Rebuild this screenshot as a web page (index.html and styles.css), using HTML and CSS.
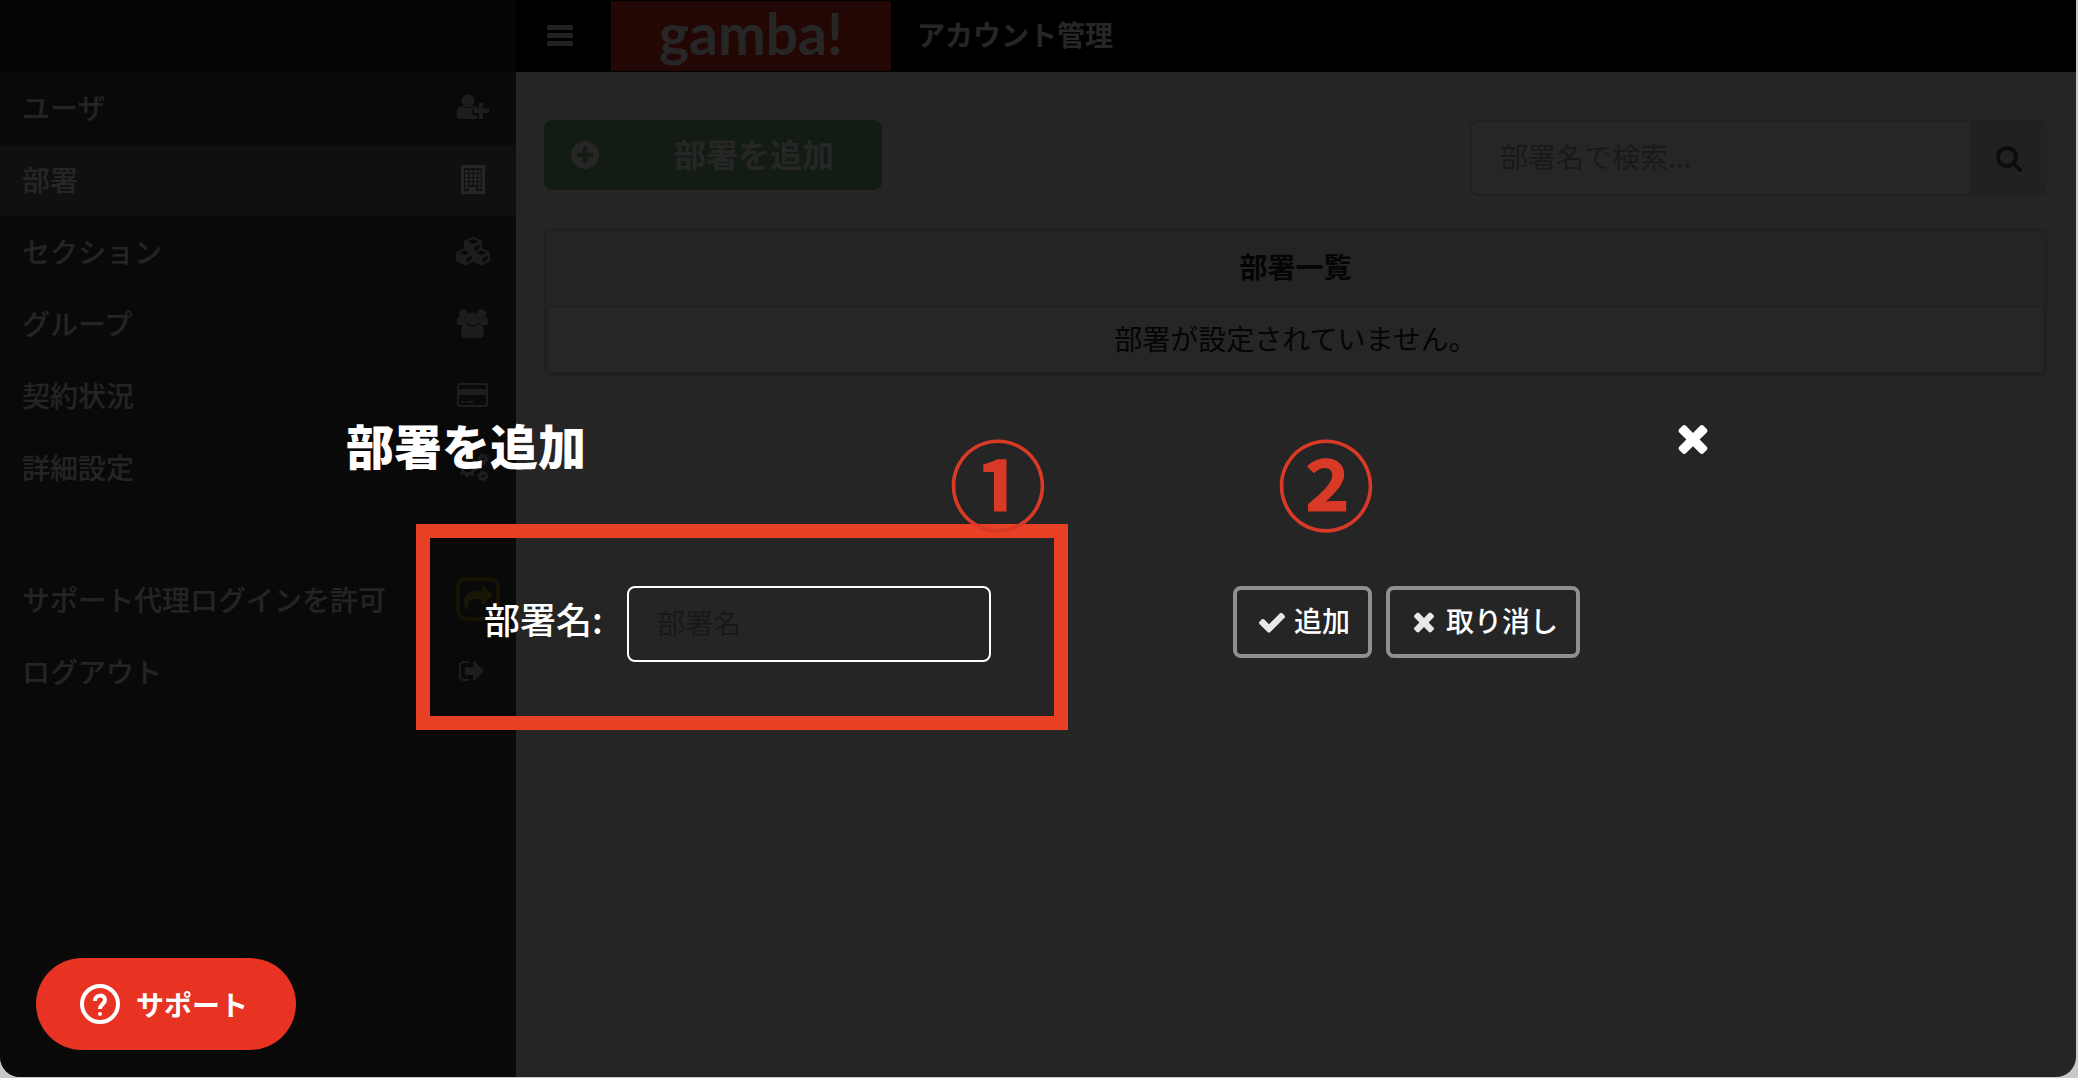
FILE: index.html
```html
<!DOCTYPE html>
<html lang="ja">
<head>
    <meta charset="UTF-8">
    <meta name="viewport" content="width=device-width, initial-scale=1.0">
    <title>gamba! アカウント管理</title>
    <link rel="stylesheet" href="styles.css">
</head>
<body>
    <div class="window">
        <aside class="sidebar">
            <div class="sidebar-top"></div>
            <nav>
                <a class="menu-item" href="#">ユーザ
                    <svg class="menu-icon" viewBox="0 0 34 34"><circle cx="12" cy="11" r="6.5"/><path d="M6 16c3 3 9 3 12 0 2 0 3 1 3.500 2.500H16.500V25H21v4H4.500C2 29 0.500 27.500 0.500 25c0-5 1.500-9 5.500-9z"/><path d="M23 13h4v5.500h6V23h-6v6h-4v-6h-5v-4.500h5z"/></svg>
                </a>
                <a class="menu-item active" href="#">部署
                    <svg class="menu-icon" viewBox="0 0 34 34"><path fill-rule="evenodd" d="M5 3h24v29H5zM8 6v23h5v-4h7v4h6V6z"/><path d="M9 8h3v3H9zm4.500 0h3v3h-3zm4.500 0h3v3h-3zm4 0h3v3h-3zM9 12h3v3H9zm4.500 0h3v3h-3zm4.500 0h3v3h-3zm4 0h3v3h-3zM9 16h3v3H9zm4.500 0h3v3h-3zm4.500 0h3v3h-3zm4 0h3v3h-3zM9 20h3v3H9zm4.500 0h3v3h-3zm4.500 0h3v3h-3zm4 0h3v3h-3zM9 24h3v3H9zm13 0h3v3h-3z"/></svg>
                </a>
                <a class="menu-item" href="#">セクション
                    <svg class="menu-icon" viewBox="0 0 34 34">
                        <defs><path id="cube" fill-rule="evenodd" d="M9 0L18 4v9l-9 4.500L0 13V4zM3.500 4.500l5.500 2.500L14.500 4.500 9 2zM10.500 10v4.500l5-2.500V7.500z"/></defs>
                        <use href="#cube" x="8" y="3"/><use href="#cube" x="0" y="14"/><use href="#cube" x="16" y="14"/>
                    </svg>
                </a>
                <a class="menu-item" href="#">グループ
                    <svg class="menu-icon" viewBox="0 0 34 34"><circle cx="7.500" cy="8" r="4.500"/><circle cx="25.500" cy="8" r="4.500"/><circle cx="16.500" cy="13" r="6.500"/><path d="M3 11c2 2 5 2.500 7 1-.5 3 0 5 1.500 7H4c-2 0-3-1-3-3 0-2 .5-5 2-5zm27 0c-2 2-5 2.500-7 1 .5 3 0 5-1.500 7H29c2 0 3-1 3-3 0-2-.5-5-2-5zM10 18c4 3.500 9 3.500 13 0 4 0 5 5 5 9 0 3-1.500 5-4 5H9.500c-3 0-4.500-2-4.500-5 0-4 1-9 5-9z"/></svg>
                </a>
                <a class="menu-item" href="#">契約状況
                    <svg class="menu-icon" viewBox="0 0 34 34"><path fill-rule="evenodd" d="M4 5h25c2 0 3 1 3 3v18c0 2-1 3-3 3H4c-2 0-3-1-3-3V8c0-2 1-3 3-3zm0 2c-.7 0-1 .3-1 1v3h27V8c0-.7-.3-1-1-1zM3 17v9c0 .7.3 1 1 1h25c.7 0 1-.3 1-1v-9zM5 23h4v2H5zm6 0h6v2h-6z"/></svg>
                </a>
                <a class="menu-item" href="#">詳細設定
                    <svg class="menu-icon gears" viewBox="0 0 34 34"><circle cx="12" cy="18" r="6"/><circle class="teeth" cx="12" cy="18" r="8"/><circle cx="27" cy="9" r="3"/><circle class="teeth small" cx="27" cy="9" r="4"/><circle cx="27" cy="26" r="3"/><circle class="teeth small" cx="27" cy="26" r="4"/></svg>
                </a>
            </nav>
            <nav class="menu-bottom">
                <a class="menu-item" href="#">サポート代理ログインを許可
                    <span class="proxy-icon"><svg viewBox="0 0 1792 1792"><path d="M1792 640q0 26-19 45l-512 512q-19 19-45 19t-45-19-19-45v-256h-224q-98 0-175.500 6t-154 21.500-133 42.500-105.500 69.500-80 101-48.500 138.500-17.500 181q0 55 5 123 0 6 2.500 23.500t2.500 26.500q0 15-8.500 25t-23.500 10q-16 0-28-17-7-9-13-22t-13.500-30-10.500-24q-127-285-127-451 0-199 53-333 162-403 875-403h224v-256q0-26 19-45t45-19 45 19l512 512q19 19 19 45z"/></svg></span>
                </a>
                <a class="menu-item" href="#">ログアウト
                    <svg class="menu-icon logout-icon" viewBox="0 0 1792 1792"><path d="M704 1440q0 4 1 20t.5 26.500-3 23.500-10 19.500-20.500 6.500h-320q-119 0-203.500-84.500t-84.500-203.500v-704q0-119 84.500-203.500t203.500-84.500h320q13 0 22.500 9.500t9.500 22.500q0 4 1 20t.5 26.500-3 23.500-10 19.500-20.500 6.500h-320q-66 0-113 47t-47 113v704q0 66 47 113t113 47h312l11.500 1 11.500 3 8 5.500 7 9 2 13.500zm928-544q0 26-19 45l-544 544q-19 19-45 19t-45-19-19-45v-288h-448q-26 0-45-19t-19-45v-384q0-26 19-45t45-19h448v-288q0-26 19-45t45-19 45 19l544 544q19 19 19 45z"/></svg>
                </a>
            </nav>
        </aside>

        <div class="main">
            <header class="header">
                <button class="menu-toggle" type="button" aria-label="メニュー">
                    <svg viewBox="0 0 26 22"><rect width="26" height="5" rx="1"/><rect y="8" width="26" height="5" rx="1"/><rect y="16" width="26" height="5" rx="1"/></svg>
                </button>
                <a class="logo" href="#">gamba!</a>
                <span class="header-title">アカウント管理</span>
            </header>
            <main class="content">
                <div class="toolbar">
                    <button class="add-button" type="button">
                        <svg viewBox="128 128 1536 1536"><path d="M1344 960v-128q0-26-19-45t-45-19h-256v-256q0-26-19-45t-45-19h-128q-26 0-45 19t-19 45v256h-256q-26 0-45 19t-19 45v128q0 26 19 45t45 19h256v256q0 26 19 45t45 19h128q26 0 45-19t19-45v-256h256q26 0 45-19t19-45zm320-64q0 209-103 385.500t-279.500 279.500-385.500 103-385.500-103-279.500-279.500-103-385.500 103-385.500 279.500-279.500 385.500-103 385.500 103 279.500 279.500 103 385.500z"/></svg>
                        <span>部署を追加</span>
                    </button>
                    <form class="search">
                        <input type="text" placeholder="部署名で検索..." aria-label="部署名で検索">
                        <button type="button" aria-label="検索">
                            <svg viewBox="64 128 1664 1664"><path d="M1216 832q0-185-131.500-316.500t-316.500-131.500-316.500 131.500-131.500 316.500 131.500 316.500 316.500 131.500 316.500-131.500 131.500-316.500zm512 832q0 52-38 90t-90 38q-54 0-90-38l-343-342q-179 124-399 124-143 0-273.500-55.500t-225-150-150-225-55.500-273.500 55.500-273.500 150-225 225-150 273.500-55.500 273.500 55.500 225 150 150 225 55.500 273.500q0 220-124 399l343 343q37 37 37 90z"/></svg>
                        </button>
                    </form>
                </div>
                <table class="list">
                    <thead>
                        <tr><th>部署一覧</th></tr>
                    </thead>
                    <tbody>
                        <tr><td>部署が設定されていません。</td></tr>
                    </tbody>
                </table>
            </main>
        </div>

        <div class="overlay">
            <section class="modal" role="dialog" aria-labelledby="modal-title">
                <div class="modal-head">
                    <h1 id="modal-title">部署を追加</h1>
                    <button class="close" type="button" aria-label="閉じる">
                        <svg viewBox="302 238 1188 1316"><use href="#times"/></svg>
                    </button>
                </div>
                <form class="modal-form">
                    <div class="field">
                        <span class="step">①</span>
                        <label for="name">部署名:</label>
                        <input id="name" type="text" placeholder="部署名">
                    </div>
                    <div class="actions">
                        <span class="step">②</span>
                        <button type="button">
                            <svg viewBox="121 242 1550 1280"><path d="M1671 566q0 40-28 68l-724 724-136 136q-28 28-68 28t-68-28l-136-136-362-362q-28-28-28-68t28-68l136-136q28-28 68-28t68 28l294 295 656-657q28-28 68-28t68 28l136 136q28 28 28 68z"/></svg>追加
                        </button>
                        <button class="cancel" type="button">
                            <svg viewBox="302 302 1188 1252"><path id="times" d="M1490 1322q0 40-28 68l-136 136q-28 28-68 28t-68-28l-294-294-294 294q-28 28-68 28t-68-28l-136-136q-28-28-28-68t28-68l294-294-294-294q-28-28-28-68t28-68l136-136q28-28 68-28t68 28l294 294 294-294q28-28 68-28t68 28l136 136q28 28 28 68t-28 68l-294 294 294 294q28 28 28 68z"/></svg>取り消し
                        </button>
                    </div>
                </form>
            </section>
        </div>

        <button class="support" type="button">
            <svg viewBox="0 0 40 40"><circle cx="20" cy="20" r="18"/><path d="M15 17c0-7 10-7 10-1 0 4-5 4-5 9"/><circle class="dot" cx="20" cy="30" r="2"/></svg>
            サポート
        </button>
    </div>
</body>
</html>
```

FILE: styles.css
```css
* {
    box-sizing: border-box;
}
body {
    margin: 0;
    background: #c8c8c8;
    font-family: "Noto Sans CJK JP", sans-serif;
    font-size: 28px;
    line-height: 40px;
}
button, input {
    font: inherit;
    margin: 0;
}
button {
    padding: 0;
    border: none;
    background: none;
    color: inherit;
}
a {
    color: inherit;
    text-decoration: none;
}
svg {
    display: block;
    flex: none;
    fill: currentColor;
}
.window {
    position: relative;
    display: flex;
    min-height: calc(100vh - 1px);
    margin-right: 2px;
    overflow: hidden;
    border-radius: 0 0 20px 20px;
    background: #f7f7f7;
}

/* sidebar */
.sidebar {
    flex: none;
    width: 516px;
    background: #404040;
    color: #eee;
    font-weight: 500;
}
.sidebar-top {
    height: 72px;
    background: #262626;
}
.menu-item {
    display: flex;
    align-items: center;
    justify-content: space-between;
    height: 72px;
    padding: 0 16px 4px 22px;
    border-top: 1px solid #484848;
}
.menu-item.active {
    background: #73676b;
    color: #fff;
}
.menu-icon {
    width: 34px;
    height: 34px;
    margin-right: 10px;
    color: #c4c4c4;
}
.active .menu-icon {
    color: #fff;
}
.gears {
    fill: none;
    stroke: currentColor;
    stroke-width: 3;
}
.teeth {
    stroke-dasharray: 3 3;
}
.teeth.small {
    stroke-dasharray: 2 2;
}
.menu-bottom {
    margin-top: 60px;
}
.proxy-icon {
    padding: 4px;
    border: 4px solid #9c7c18;
    border-radius: 10px;
    color: #b0942c;
}
.proxy-icon svg {
    width: 28px;
    height: 28px;
}
.logout-icon {
    width: 28px;
    height: 28px;
    margin-right: 14px;
}

/* header */
.main {
    flex: 1;
}
.header {
    display: flex;
    align-items: center;
    height: 72px;
    background: #000;
    color: #fff;
    font-weight: bold;
}
.menu-toggle {
    width: 95px;
    padding-left: 31px;
    color: #ddd;
}
.menu-toggle svg {
    width: 26px;
    height: 22px;
}
.logo {
    width: 280px;
    height: 70px;
    background: #e22f1b;
    font-family: Lato, sans-serif;
    font-size: 57px;
    font-weight: bold;
    line-height: 64px;
    text-align: center;
}
.header-title {
    padding: 0 0 4px 26px;
}

/* content */
.content {
    padding: 48px 29px 0 28px;
    color: #333;
}
.toolbar {
    display: flex;
    align-items: flex-start;
    justify-content: space-between;
    margin-bottom: 32px;
}
.add-button {
    display: flex;
    align-items: center;
    width: 338px;
    height: 70px;
    padding: 0 27px;
    border-radius: 8px;
    background: #78ba7e;
    color: #fff;
    font-size: 32px;
    font-weight: bold;
}
.add-button svg {
    width: 28px;
    height: 28px;
}
.add-button span {
    flex: 1;
    padding: 0 0 4px 54px;
}
.search {
    display: flex;
    width: 577px;
    height: 76px;
}
.search input {
    flex: 1;
    min-width: 0;
    padding: 0 28px 4px;
    border: 2px solid #d4d4d4;
    border-right: none;
    border-radius: 8px 0 0 8px;
    background: #fff;
}
.search input::placeholder {
    color: #aaa;
    opacity: 1;
}
.search button {
    display: flex;
    align-items: center;
    justify-content: center;
    width: 77px;
    padding-top: 2px;
    border-radius: 0 8px 8px 0;
    background: #dadada;
    color: #505050;
}
.search svg {
    width: 26px;
    height: 26px;
}
.list {
    width: 100%;
    border: 2px solid #d4d4d4;
    border-radius: 8px;
    border-spacing: 0;
    background: #f0f0f0;
    text-align: center;
}
.list th {
    height: 76px;
    padding: 0 0 4px;
    color: #222;
}
.list td {
    height: 68px;
    padding: 0 0 4px;
    border: 2px solid #d4d4d4;
    border-radius: 0 0 6px 6px;
    background: #fff;
    color: #222;
}

/* modal */
.overlay {
    position: absolute;
    inset: 0;
    padding-top: 408px;
    background: rgba(0, 0, 0, 0.85);
    color: #fff;
}
.modal {
    width: 66.66%;
    margin: 0 auto;
}
.modal-head {
    display: flex;
    justify-content: space-between;
    padding-right: 22px;
}
.modal-head h1 {
    margin: 0;
    font-size: 48px;
    font-weight: 900;
    line-height: 72px;
}
.close {
    align-self: flex-start;
    margin-top: 14px;
}
.close svg {
    width: 30px;
    height: 32px;
}
.modal-form {
    display: flex;
    align-items: flex-start;
    margin: 44px 0 0 70px;
}
.field {
    position: relative;
    display: flex;
    align-items: center;
    justify-content: space-between;
    width: 652px;
    height: 206px;
    padding: 0 63px 6px 54px;
    border: 14px solid #e84025;
}
.field label {
    padding-bottom: 12px;
    font-size: 36px;
    font-weight: 500;
}
.field input {
    width: 364px;
    height: 76px;
    padding: 0 28px 4px;
    border: 2px solid #fff;
    border-radius: 8px;
    background: transparent;
    color: #fff;
}
.field input::placeholder {
    color: #181818;
    opacity: 1;
}
.actions {
    position: relative;
    display: flex;
    gap: 14px;
    margin: 62px 0 0 165px;
}
.actions button {
    display: flex;
    align-items: center;
    gap: 9px;
    height: 72px;
    padding: 0 18px 4px 22px;
    border: 4px solid #909090;
    border-radius: 8px;
    font-weight: 500;
}
.actions .cancel {
    gap: 12px;
    padding-left: 24px;
}
.actions svg {
    width: 26px;
    height: 22px;
    margin-top: 4px;
    color: #e8e8e8;
}
.actions .cancel svg {
    width: 20px;
}
.step {
    position: absolute;
    z-index: 1;
    top: -104px;
    left: 519px;
    color: #d93a26;
    font-size: 98px;
    font-weight: bold;
    line-height: 93px;
}
.actions .step {
    top: -152px;
    left: 44px;
}

/* support chat button */
.support {
    position: absolute;
    left: 36px;
    bottom: 27px;
    display: flex;
    align-items: center;
    gap: 16px;
    height: 92px;
    padding: 0 48px 0 44px;
    border-radius: 46px;
    background: #e83323;
    color: #fff;
    font-weight: bold;
}
.support svg {
    width: 40px;
    height: 40px;
    fill: none;
    stroke: currentColor;
    stroke-width: 4;
}
.support .dot {
    fill: currentColor;
    stroke: none;
}
```
